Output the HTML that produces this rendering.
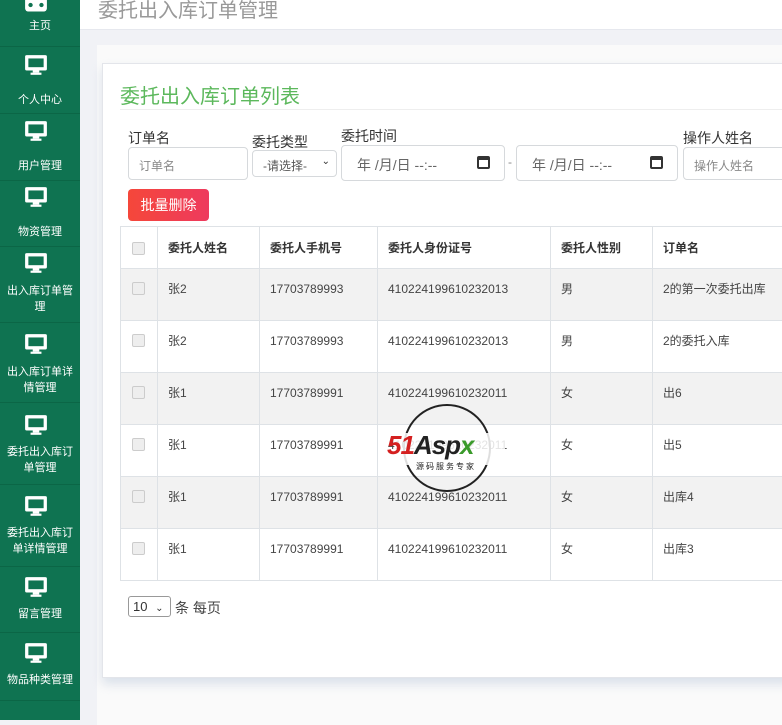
<!DOCTYPE html>
<html><head><meta charset="utf-8"><style>
*{box-sizing:border-box;margin:0;padding:0}
body{width:782px;height:720px;overflow:hidden;position:relative;background:#f1f2f6;font-family:"Liberation Sans","Noto Sans CJK SC",sans-serif;color:#333}
.a{position:absolute}
#side{left:0;top:0;width:80px;height:720px;background:#0f7351}
.it{position:absolute;left:0;width:80px;color:#fff;font-size:11px;text-align:center;line-height:16px}
.ic{position:absolute;left:24px;width:24px;height:22px}
.sep{position:absolute;left:0;width:80px;height:1px;background:#0b6646}
#hdr{left:80px;top:0;width:702px;height:30px;background:#fff;border-bottom:1px solid #e6e8ee}
#outer{left:97px;top:45px;width:700px;height:680px;background:#fafafa}
#card{left:102px;top:63px;width:690px;height:615px;background:#fff;border:1px solid #e3e5ea;box-shadow:0 6px 10px rgba(180,195,215,.45)}
.lbl{font-size:14px;color:#333}
.inp{border:1px solid #d6d9dc;border-radius:4px;background:#fff;font-size:12px;color:#888}
table{border-collapse:collapse;font-size:12px}
td,th{border:1px solid #dee2e6;text-align:left;padding-left:10px;color:#444}
th{font-weight:bold;height:42px;color:#333}
td{height:52px;vertical-align:top;padding-top:13px;line-height:14px}
tr.g td{background:#f2f2f2}
.cb{display:inline-block;width:13px;height:13px;border:1px solid #ccc;border-radius:2px;background:#eee;vertical-align:top}
</style></head><body>
<div id="side" class="a">
<svg class="ic" style="top:-6px" viewBox="0 0 22 20"><rect x="1" y="2" width="20" height="14" rx="3" fill="#fff"/><circle cx="6" cy="10" r="2" fill="#0f7351"/><circle cx="16" cy="10" r="2" fill="#0f7351"/></svg>
<div class="it" style="top:18px">主页</div>
<div class="sep" style="top:46px"></div>
</div>
<div id="hdr" class="a"><div class="a" style="left:18px;top:-6px;font-size:20px;color:#999">委托出入库订单管理</div></div>
<div id="outer" class="a"></div>
<div id="card" class="a"></div>
<div class="a" style="left:120px;top:80px;font-size:20px;color:#5cb85c">委托出入库订单列表</div>
<div class="a" style="left:120px;top:109px;width:662px;height:1px;background:#eee"></div>
<div class="a lbl" style="left:128px;top:128px">订单名</div>
<div class="a inp" style="left:128px;top:147px;width:120px;height:33px;padding:9px 10px">订单名</div>
<div class="a lbl" style="left:252px;top:132px">委托类型</div>
<div class="a inp" style="left:252px;top:150px;width:85px;height:27px;padding:6px 10px;color:#555">-请选择- <span style="position:absolute;right:6px;top:5px;font-size:10px;color:#333">⌄</span></div>
<div class="a lbl" style="left:341px;top:126px">委托时间</div>
<div class="a inp" style="left:341px;top:145px;width:164px;height:36px;padding:9px 15px;font-size:14px;color:#666">年 /月/日 --:-- <span style="position:absolute;right:14px;top:10px;width:13px;height:13px;border:2px solid #333;border-top-width:4px;border-radius:2px"></span></div>
<div class="a" style="left:508px;top:155px;color:#888;font-size:12px">-</div>
<div class="a inp" style="left:516px;top:145px;width:162px;height:36px;padding:9px 15px;font-size:14px;color:#666">年 /月/日 --:-- <span style="position:absolute;right:14px;top:10px;width:13px;height:13px;border:2px solid #333;border-top-width:4px;border-radius:2px"></span></div>
<div class="a lbl" style="left:683px;top:128px">操作人姓名</div>
<div class="a inp" style="left:683px;top:147px;width:110px;height:33px;padding:9px 10px">操作人姓名</div>
<div class="a" style="left:128px;top:189px;width:81px;height:32px;border-radius:4px;background:linear-gradient(90deg,#f5473a,#ee3a5e);color:#fff;font-size:14px;line-height:32px;text-align:center">批量删除</div>
<table class="a" style="left:120px;top:226px;width:680px">
<tr><th style="width:37px;padding-left:11px"><span class="cb" style="vertical-align:middle"></span></th><th style="width:102px">委托人姓名</th><th style="width:118px">委托人手机号</th><th style="width:173px">委托人身份证号</th><th style="width:102px">委托人性别</th><th>订单名</th></tr>
<tr class="g"><td style="padding-left:11px"><span class="cb"></span></td><td>张2</td><td>17703789993</td><td>410224199610232013</td><td>男</td><td>2的第一次委托出库</td></tr>
<tr><td style="padding-left:11px"><span class="cb"></span></td><td>张2</td><td>17703789993</td><td>410224199610232013</td><td>男</td><td>2的委托入库</td></tr>
<tr class="g"><td style="padding-left:11px"><span class="cb"></span></td><td>张1</td><td>17703789991</td><td>410224199610232011</td><td>女</td><td>出6</td></tr>
<tr><td style="padding-left:11px"><span class="cb"></span></td><td>张1</td><td>17703789991</td><td>410224199610232011</td><td>女</td><td>出5</td></tr>
<tr class="g"><td style="padding-left:11px"><span class="cb"></span></td><td>张1</td><td>17703789991</td><td>410224199610232011</td><td>女</td><td>出库4</td></tr>
<tr><td style="padding-left:11px"><span class="cb"></span></td><td>张1</td><td>17703789991</td><td>410224199610232011</td><td>女</td><td>出库3</td></tr>
</table>
<div class="a" style="left:128px;top:596px;width:43px;height:21px;border:1px solid #999;border-radius:3px;font-size:13px;padding:2px 4px;color:#333">10 <span style="font-size:10px;margin-left:4px">⌄</span></div>
<div class="a" style="left:175px;top:598px;font-size:14px;color:#444">条 每页</div>
<svg class="a" style="left:385px;top:403px" width="130" height="90" viewBox="0 0 130 90"><circle cx="62" cy="45" r="43" fill="none" stroke="#222" stroke-width="2"/><rect x="10" y="30" width="110" height="32" fill="#fff" opacity=".85"/><text x="2" y="51" font-family="Liberation Sans" font-weight="bold" font-style="italic" font-size="26" letter-spacing="-1"><tspan fill="#d42020">51</tspan><tspan fill="#222">Asp</tspan><tspan fill="#3a9a2a">x</tspan></text><text x="31" y="66" font-family="Noto Sans CJK SC" font-size="8" fill="#222" letter-spacing="2">源码服务专家</text></svg>
<script>
var s=document.getElementById('side');
var items=[[54,92,'个人中心'],[120,158,'用户管理'],[186,224,'物资管理'],[252,283,'出入库订单管<br>理'],[333,364,'出入库订单详<br>情管理'],[414,444,'委托出入库订<br>单管理'],[495,525,'委托出入库订<br>单详情管理'],[576,606,'留言管理'],[642,672,'物品种类管理']];
var h='';var seps=[113,180,246,322,402,484,566,632,700];
items.forEach(function(t,i){h+='<svg class="ic" style="top:'+t[0]+'px" viewBox="0 0 22 20"><rect x="1" y="1" width="20" height="14" rx="1.5" fill="#fff"/><rect x="4" y="4" width="14" height="8" fill="#0f7351"/><rect x="8" y="15" width="6" height="2" fill="#fff"/><rect x="6" y="17" width="10" height="2" fill="#fff"/></svg><div class="it" style="top:'+t[1]+'px">'+t[2]+'</div><div class="sep" style="top:'+seps[i]+'px"></div>'});
s.innerHTML+=h;
</script>
</body></html>
